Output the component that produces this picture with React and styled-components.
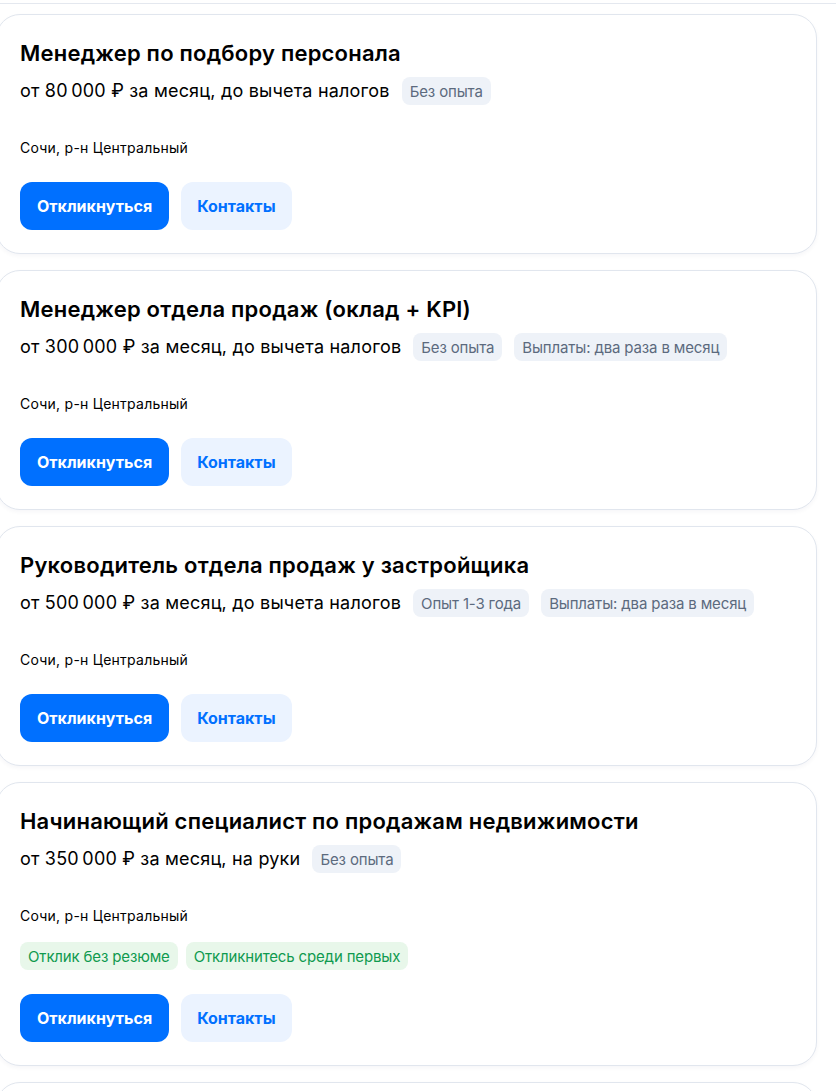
import React from 'react';
import styled, { createGlobalStyle } from 'styled-components';

const GlobalStyle = createGlobalStyle`
  html, body {
    margin: 0;
    padding: 0;
    background: #fff;
    overflow: hidden;
  }
  body {
    font-family: Inter, 'Noto Sans', sans-serif;
    color: #000;
  }
`;

const vacancies = [
  {
    title: 'Менеджер по подбору персонала',
    salary: 'от 80\u2009000 ₽ за месяц, до вычета налогов',
    tags: ['Без опыта'],
    city: 'Сочи, р-н Центральный',
    badges: [],
  },
  {
    title: 'Менеджер отдела продаж (оклад + KPI)',
    salary: 'от 300\u2009000 ₽ за месяц, до вычета налогов',
    tags: ['Без опыта', 'Выплаты: два раза в месяц'],
    city: 'Сочи, р-н Центральный',
    badges: [],
  },
  {
    title: 'Руководитель отдела продаж у застройщика',
    salary: 'от 500\u2009000 ₽ за месяц, до вычета налогов',
    tags: ['Опыт 1-3 года', 'Выплаты: два раза в месяц'],
    city: 'Сочи, р-н Центральный',
    badges: [],
  },
  {
    title: 'Начинающий специалист по продажам недвижимости',
    salary: 'от 350\u2009000 ₽ за месяц, на руки',
    tags: ['Без опыта'],
    city: 'Сочи, р-н Центральный',
    badges: ['Отклик без резюме', 'Откликнитесь среди первых'],
  },
];

const VacancyCard = ({ item }) => (
  <Card>
    <Title>{item.title}</Title>
    <SalaryRow>
      <Salary>{item.salary}</Salary>
      {item.tags.map((t) => (
        <Tag key={t}>{t}</Tag>
      ))}
    </SalaryRow>
    <City>{item.city}</City>
    {item.badges.length > 0 && (
      <BadgeRow>
        {item.badges.map((b) => (
          <Tag key={b} $green>{b}</Tag>
        ))}
      </BadgeRow>
    )}
    <Actions>
      <Button $primary>Откликнуться</Button>
      <Button>Контакты</Button>
    </Actions>
  </Card>
);

const App = () => (
  <>
    <GlobalStyle />
    <Divider />
    <List>
      {vacancies.map((v) => (
        <VacancyCard key={v.title} item={v} />
      ))}
      <Card $stub />
    </List>
  </>
);

const Divider = styled.div`
  height: 3px;
  border-bottom: 1px solid #e4e8ef;
`;

const List = styled.div`
  display: flex;
  flex-direction: column;
  gap: 16px;
  width: 821px;
  margin-left: -4px;
  margin-top: 10px;
`;

const Card = styled.div`
  box-sizing: border-box;
  display: flex;
  flex-direction: column;
  align-items: flex-start;
  padding: 23px 23px 23px;
  border: 1px solid #e1e6ee;
  border-radius: 24px;
  background: #fff;
  box-shadow: 0 2px 4px rgba(12, 38, 82, 0.04);
  ${(p) => p.$stub && 'height: 240px;'}
`;

const Title = styled.div`
  font-size: 22px;
  line-height: 30px;
  font-weight: 600;
  letter-spacing: 0.22px;
`;

const SalaryRow = styled.div`
  display: flex;
  align-items: center;
  gap: 12px;
  margin-top: 9px;
`;

const Salary = styled.span`
  font-size: 18px;
  line-height: 28px;
  font-weight: 400;
  letter-spacing: 0.2px;
`;

const Tag = styled.span`
  display: inline-flex;
  align-items: center;
  height: 28px;
  padding: 0 8px;
  border-radius: 8px;
  font-size: 15px;
  letter-spacing: -0.15px;
  background: ${(p) => (p.$green ? '#e8f7ea' : '#eef2f8')};
  color: ${(p) => (p.$green ? '#0f9a4f' : '#5c6a7e')};
`;

const City = styled.div`
  margin-top: 33px;
  font-size: 14px;
  line-height: 20px;
  letter-spacing: 0.25px;
`;

const BadgeRow = styled.div`
  display: flex;
  gap: 8px;
  margin-top: 16px;
`;

const Actions = styled.div`
  display: flex;
  gap: 12px;
  margin-top: 24px;
`;

const Button = styled.button`
  height: 48px;
  padding: 0 ${(p) => (p.$primary ? '17px' : '16px')};
  border: none;
  border-radius: 12px;
  font-family: inherit;
  font-size: 16px;
  font-weight: 700;
  line-height: 46px;
  background: ${(p) => (p.$primary ? '#0070ff' : '#ebf3ff')};
  color: ${(p) => (p.$primary ? '#fff' : '#0070ff')};
  cursor: pointer;
`;

export default App;
